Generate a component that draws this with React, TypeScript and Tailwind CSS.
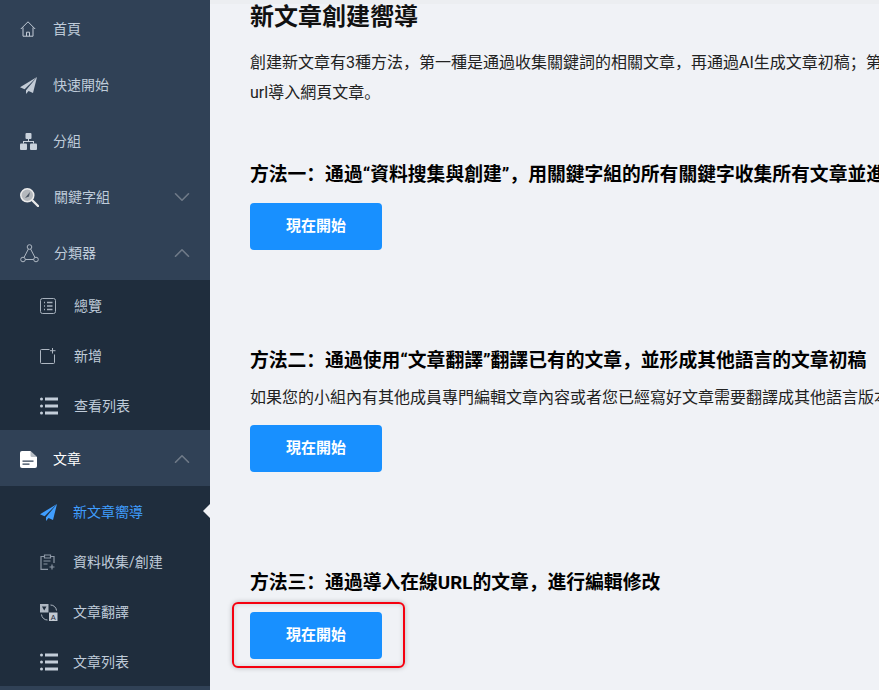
import { ChevronDown, ChevronUp } from "lucide-react";
import type { ReactNode } from "react";

const FONT = "font-['Roboto','Noto_Sans_CJK_SC',sans-serif]";

function HomeIcon() {
  return (
    <svg width="16" height="16" viewBox="0 0 16 16" fill="none" stroke="#c2cbd6" strokeWidth="1">
      <path d="M.8 8 8 .8 15.2 8M3 6.500v8.700h10V6.500M6.500 15.200v-4h3v4" />
    </svg>
  );
}

function PlaneIcon({ color }: { color: string }) {
  return (
    <svg width="17" height="17" viewBox="0 0 17 17" fill={color}>
      <path d="M17 0 0 10.200l4.600 2L17 0z" />
      <path d="M17 0 6 13.200v3.800l2.600-3 4.400 2L17 0z" />
    </svg>
  );
}

function GroupIcon() {
  return (
    <svg width="17" height="17" viewBox="0 0 17 17" fill="#c9d2dc">
      <rect x="5.500" y="0" width="6" height="6" rx="1" />
      <rect x="0" y="10.500" width="7" height="6.500" rx="1" />
      <rect x="10" y="10.500" width="7" height="6.500" rx="1" />
      <path d="M8 6h1v2h5v2.500h-1V9H4v1.500H3V8h5z" />
    </svg>
  );
}

function KeywordIcon() {
  return (
    <svg width="19" height="19" viewBox="0 0 19 19">
      <circle cx="7.300" cy="7.300" r="6.500" fill="#b4b8bd" stroke="#ececec" strokeWidth="1.500" />
      <path d="M5 10 10 4 9 8.500z" fill="#4b5664" />
      <path d="M12 12l6 6" stroke="#e8e8e8" strokeWidth="2.400" strokeLinecap="round" />
    </svg>
  );
}

function NodesIcon() {
  return (
    <svg width="19" height="19" viewBox="0 0 19 19" fill="none" stroke="#aeb7c2" strokeWidth="1">
      <circle cx="9.500" cy="3" r="2.300" />
      <circle cx="3" cy="15.500" r="2.300" />
      <circle cx="16" cy="15.500" r="2.300" />
      <path d="M8.400 5 4 13.500M10.600 5 15 13.500M5.300 15.500h8.400" />
    </svg>
  );
}

function OverviewIcon() {
  return (
    <svg width="16" height="16" viewBox="0 0 16 16" fill="none" stroke="#a6b0bc">
      <rect x=".5" y=".5" width="15" height="15" rx="2" />
      <path d="M4 4.500h1M7 4.500h5.500M4 8h1M7 8h5.500M4 11.500h1M7 11.500h5.500" strokeWidth="1.300" />
    </svg>
  );
}

function AddIcon() {
  return (
    <svg width="16" height="16" viewBox="0 0 16 16" fill="none" stroke="#aeb7c2">
      <path d="M9.500 1.500H1.500a1 1 0 0 0-1 1v12a1 1 0 0 0 1 1h12a1 1 0 0 0 1-1V6.500M12.500 0v5.500M10 2.700h5.500" />
    </svg>
  );
}

function ListIcon() {
  return (
    <svg width="18" height="18" viewBox="0 0 18 18" fill="#c3cdd9">
      <circle cx="1.500" cy="2" r="1.500" />
      <circle cx="1.500" cy="9" r="1.500" />
      <circle cx="1.500" cy="16" r="1.500" />
      <rect x="5" y="0.500" width="13" height="3" />
      <rect x="5" y="7.500" width="13" height="3" />
      <rect x="5" y="14.500" width="13" height="3" />
    </svg>
  );
}

function FileIcon() {
  return (
    <svg width="17" height="17" viewBox="0 0 17 17">
      <path d="M2 0h8.500L17 6v9a2 2 0 0 1-2 2H2a2 2 0 0 1-2-2V2a2 2 0 0 1 2-2z" fill="#fff" />
      <path d="M10.500 0v4.500a1.500 1.500 0 0 0 1.500 1.500h5z" fill="#304156" opacity=".35" />
      <path d="M2.500 9.500h11v1.300h-11zM2.500 12.500h7v1.300h-7z" fill="#304156" />
    </svg>
  );
}

function ClipIcon() {
  return (
    <svg width="16" height="16" viewBox="0 0 16 16" fill="none" stroke="#8c97a5" strokeWidth="1.200">
      <path d="M8 15.400H1V2.500h3M11 2.500h3v6.500M4.500 1h6v3h-6zM3.500 7h7M3.500 10h4M12 10.500v5M9.500 13h5" />
    </svg>
  );
}

function TranslateIcon() {
  return (
    <svg width="18" height="17" viewBox="0 0 18 17">
      <rect x="0" y="0" width="8.500" height="8.500" fill="#aeb7c2" />
      <path d="M2 2.500h4.500L4.200 6.500z" fill="#1f2d3d" />
      <rect x="9" y="8.500" width="8.500" height="8.500" fill="#c3cad3" />
      <text x="13.200" y="15.500" fontSize="7.500" textAnchor="middle" fill="#1f2d3d" fontFamily="Liberation Sans, sans-serif">A</text>
      <path d="M10.500 1a6 6 0 0 1 6 5.500M7.500 16a6 6 0 0 1-6-5.500" fill="none" stroke="#aeb7c2" />
    </svg>
  );
}

function TopItem({ icon, label, chevron, active, labelGap = "ml-[13px]" }: { icon: ReactNode; label: string; chevron?: "up" | "down"; active?: boolean; labelGap?: string }) {
  return (
    <div className="flex h-14 items-center pl-5 pr-[15px] pt-[2px]">
      <span className="flex w-5 shrink-0 items-center">{icon}</span>
      <span className={`${labelGap} text-[14px] ${active ? "text-white" : "text-[#bfcbd9]"}`}>{label}</span>
      {chevron === "down" && <ChevronDown className="ml-auto text-[#6f7a88]" size={26} strokeWidth={1.500} />}
      {chevron === "up" && <ChevronUp className="ml-auto text-[#6f7a88]" size={26} strokeWidth={1.500} />}
    </div>
  );
}

function SubItem({ icon, label, active, labelGap = "ml-[15px]" }: { icon: ReactNode; label: string; active?: boolean; labelGap?: string }) {
  return (
    <div className="relative flex h-[50px] items-center pl-10 pt-[2px]">
      <span className="flex w-[18px] shrink-0 items-center">{icon}</span>
      <span className={`${labelGap} text-[14px] ${active ? "text-[#409eff]" : "text-[#bfcbd9]"}`}>{label}</span>
      {active && <span className="absolute right-0 top-1/2 h-0 w-0 -translate-y-1/2 border-y-[7px] border-r-[7px] border-y-transparent border-r-[#f0f2f6]" />}
    </div>
  );
}

function StartButton({ className }: { className: string }) {
  return (
    <button type="button" className={`${className} block h-[47px] w-[132px] rounded-[4px] bg-[#1890ff] text-[15px] font-bold text-white`}>
      現在開始
    </button>
  );
}

function MethodTitle({ children }: { children: ReactNode }) {
  return <h3 className="whitespace-nowrap text-[18.8px] font-bold leading-[26px] text-black">{children}</h3>;
}

export default function App() {
  return (
    <div className={`${FONT} flex h-[690px] w-[879px] overflow-hidden bg-[#f0f2f6]`}>
      <aside className="h-full w-[210px] shrink-0 overflow-hidden bg-[#304156]">
        <TopItem icon={<HomeIcon />} label="首頁" />
        <TopItem icon={<PlaneIcon color="#c2cbd6" />} label="快速開始" />
        <TopItem icon={<GroupIcon />} label="分組" />
        <TopItem icon={<KeywordIcon />} label="關鍵字組" chevron="down" labelGap="ml-[14px]" />
        <TopItem icon={<NodesIcon />} label="分類器" chevron="up" labelGap="ml-[14px]" />
        <div className="bg-[#1f2d3d]">
          <SubItem icon={<OverviewIcon />} label="總覽" labelGap="ml-4" />
          <SubItem icon={<AddIcon />} label="新增" labelGap="ml-4" />
          <SubItem icon={<ListIcon />} label="查看列表" labelGap="ml-4" />
        </div>
        <TopItem icon={<FileIcon />} label="文章" chevron="up" active />
        <div className="bg-[#1f2d3d]">
          <SubItem icon={<PlaneIcon color="#409eff" />} label="新文章嚮導" active />
          <SubItem icon={<ClipIcon />} label="資料收集/創建" />
          <SubItem icon={<TranslateIcon />} label="文章翻譯" />
          <SubItem icon={<ListIcon />} label="文章列表" />
        </div>
      </aside>
      <main className="relative min-w-0 flex-1 overflow-hidden">
        <div className="h-[4px] bg-[#eceef1]" />
        <div className="w-[1200px] pl-10">
          <h1 className="text-[24px] font-bold leading-[26px] text-[#111]">新文章創建嚮導</h1>
          <p className="mt-[18px] whitespace-nowrap text-[16px] leading-[30px] text-[#222]">
            創建新文章有3種方法，第一種是通過收集關鍵詞的相關文章，再通過AI生成文章初稿；第二種是通過翻譯已有文章，第三種是通過
            <br />
            url導入網頁文章。
          </p>
          <div className="mt-[54px]">
            <MethodTitle>方法一：通過“資料搜集與創建”，用關鍵字組的所有關鍵字收集所有文章並進行AI生成</MethodTitle>
            <StartButton className="mt-[15px]" />
          </div>
          <div className="mt-[98px]">
            <MethodTitle>方法二：通過使用“文章翻譯”翻譯已有的文章，並形成其他語言的文章初稿</MethodTitle>
            <p className="mt-[11px] whitespace-nowrap text-[16px] leading-[26px] text-[#222]">如果您的小組內有其他成員專門編輯文章內容或者您已經寫好文章需要翻譯成其他語言版本</p>
            <StartButton className="mt-[14px]" />
          </div>
          <div className="mt-[98px]">
            <MethodTitle>方法三：通過導入在線URL的文章，進行編輯修改</MethodTitle>
            <StartButton className="mt-4" />
          </div>
        </div>
        <div className="absolute left-[22px] top-[602px] h-[66px] w-[173px] rounded-[6px] border-2 border-[#f5000f] shadow-[0_0_5px_rgba(0,0,0,0.25),inset_0_0_5px_rgba(0,0,0,0.15)]" />
      </main>
    </div>
  );
}
